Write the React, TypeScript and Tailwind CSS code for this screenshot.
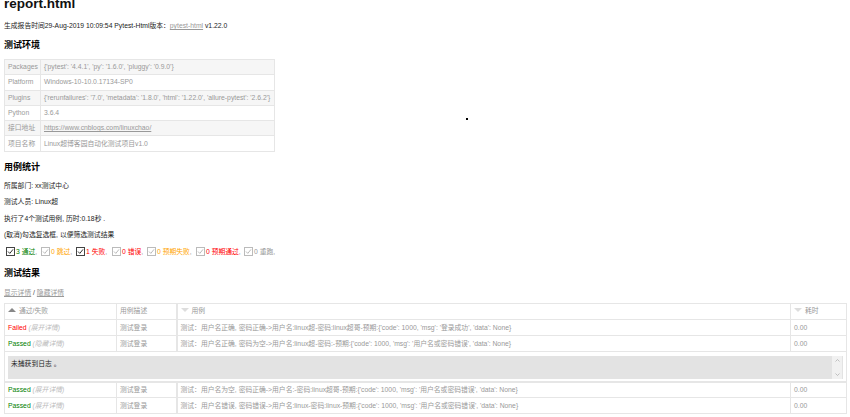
const font = '[font-family:"Liberation_Sans","Noto_Sans_CJK_SC",sans-serif]'

const envRows: [string, string, boolean?][] = [
  ['Packages', "{'pytest': '4.4.1', 'py': '1.6.0', 'pluggy': '0.9.0'}"],
  ['Platform', 'Windows-10-10.0.17134-SP0'],
  ['Plugins', "{'rerunfailures': '7.0', 'metadata': '1.8.0', 'html': '1.22.0', 'allure-pytest': '2.6.2'}"],
  ['Python', '3.6.4'],
  ['接口地址', 'https://www.cnblogs.com/linuxchao/', true],
  ['项目名称', 'Linux超博客园自动化测试项目v1.0'],
]

const filters = [
  { label: '3 通过', color: 'text-[#008000]', on: true, w: 'w-[35px]' },
  { label: '0 跳过', color: 'text-[#ffa500]', on: false, w: 'w-[35px]' },
  { label: '1 失败', color: 'text-[#ff0000]', on: true, w: 'w-[36px]' },
  { label: '0 错误', color: 'text-[#ff0000]', on: false, w: 'w-[35px]' },
  { label: '0 预期失败', color: 'text-[#ffa500]', on: false, w: 'w-[49px]' },
  { label: '0 预期通过', color: 'text-[#ff0000]', on: false, w: 'w-[48px]' },
  { label: '0 重跑', color: 'text-[#999999]', on: false, w: 'w-[30px]' },
]

const Check = ({ on }: { on: boolean }) => (
  <svg width="9" height="9" viewBox="0 0 9 9" className="shrink-0">
    <rect x="0.5" y="0.5" width="8" height="8" fill="#fff" stroke={on ? '#444' : '#bbb'} />
    <path d="M2 4.5 L3.8 6.4 L7 2.4" fill="none" stroke={on ? '#333' : '#bbb'} strokeWidth="1" />
  </svg>
)

const Heading = ({ children, className }: { children: string; className: string }) => (
  <h2 className={`text-[9px] leading-[12px] font-bold text-black ${className}`}>{children}</h2>
)

const Line = ({ children, className }: { children: string; className: string }) => (
  <p className={`text-[6.8px] leading-[10px] text-[#222] ${className}`}>{children}</p>
)

const ResultRow = ({ result, hint, name }: { result: string; hint: string; name: string }) => (
  <tr className="h-[16px] border-b border-[#e6e6e6]">
    <td className={`border-x border-[#e6e6e6] pt-[1px] pl-[3px] ${result === 'Failed' ? 'text-[#ff0000]' : 'text-[#008000]'}`}>
      {result} <span className="italic text-[#bbbbbb]">({hint})</span>
    </td>
    <td className="border-r-2 border-[#e6e6e6] pt-[1px] pl-[3px]">测试登录</td>
    <td className="border-r border-[#e6e6e6] pt-[1px] pl-[3px]">{name}</td>
    <td className="border-r border-[#e6e6e6] pt-[1px] pl-[3px]">0.00</td>
  </tr>
)

const Tri = ({ up, dark }: { up?: boolean; dark?: boolean }) => (
  <svg width="8" height="4" viewBox="0 0 8 4" className="mr-[3px] inline-block align-[1px]">
    <path d={up ? 'M0 4 L4 0 L8 4 Z' : 'M0 0 L8 0 L4 4 Z'} fill={dark ? '#888' : '#ddd'} />
  </svg>
)

export default function App() {
  return (
    <div className={`relative h-[417px] w-[850px] overflow-hidden bg-white pl-[4px] ${font}`}>
      <h1 className="mt-[-4px] text-[13.5px] leading-[16px] font-bold text-[#111]">report.html</h1>
      <p className="mt-[9px] text-[6.8px] leading-[10px] text-[#222]">
        生成报告时间29-Aug-2019 10:09:54 Pytest-Html版本：
        <span className="text-[#999] underline">pytest-html</span> v1.22.0
      </p>
      <Heading className="mt-[8px]">测试环境</Heading>

      <table className="mt-[8px] w-[271px] table-fixed border-collapse text-[6.8px] text-[#999]">
        <tbody>
          {envRows.map(([k, v, link], i) => (
            <tr key={k} className={`h-[15.3px] ${i % 2 === 0 ? 'bg-[#f6f6f6]' : 'bg-white'}`}>
              <td className="w-[36px] border border-[#e6e6e6] pl-[3px] whitespace-nowrap">{k}</td>
              <td className="border border-[#e6e6e6] pl-[3px] whitespace-nowrap">
                {link ? <span className="underline">{v}</span> : v}
              </td>
            </tr>
          ))}
        </tbody>
      </table>

      <Heading className="mt-[9px]">用例统计</Heading>
      <Line className="mt-[8px]">所属部门: xx测试中心</Line>
      <Line className="mt-[6px]">测试人员: Linux超</Line>
      <Line className="mt-[7px]">执行了4个测试用例, 历时:0.18秒 .</Line>
      <Line className="mt-[6px]">(取消)勾选复选框, 以便筛选测试结果</Line>

      <div className="mt-[7px] flex h-[10px] items-center pl-[2px] text-[6.8px] leading-[10px]">
        {filters.map((f) => (
          <div key={f.label} className={`flex shrink-0 items-center ${f.w}`}>
            <Check on={f.on} />
            <span className={`ml-[1px] whitespace-nowrap ${f.color}`}>{f.label}</span>
            <span className="text-[#999]">,</span>
          </div>
        ))}
      </div>

      <Heading className="mt-[10px]">测试结果</Heading>
      <p className="mt-[9px] text-[6.8px] leading-[10px] text-[#999]">
        <span className="underline">显示详情</span> <span className="text-[#444]">/</span>{' '}
        <span className="underline">隐藏详情</span>
      </p>

      <table className="mt-[5px] w-[843px] table-fixed border-collapse text-[6.8px] text-[#999]">
        <thead>
          <tr className="h-[16px] border-y border-[#e6e6e6] text-left font-normal">
            <th className="w-[112px] border-x border-[#e6e6e6] pl-[3px] font-normal">
              <Tri up dark />
              通过/失败
            </th>
            <th className="w-[60px] border-r-2 border-[#e6e6e6] pl-[3px] font-normal">用例描述</th>
            <th className="border-r border-[#e6e6e6] pl-[3px] font-normal">
              <Tri />
              用例
            </th>
            <th className="w-[56px] border-r border-[#e6e6e6] pl-[3px] font-normal">
              <Tri />
              耗时
            </th>
          </tr>
        </thead>
        <tbody>
          <ResultRow
            result="Failed"
            hint="展开详情"
            name="测试：用户名正确, 密码正确->用户名:linux超-密码:linux超哥-预期:{'code': 1000, 'msg': '登录成功', 'data': None}"
          />
          <ResultRow
            result="Passed"
            hint="隐藏详情"
            name="测试：用户名正确, 密码为空->用户名:linux超-密码:-预期:{'code': 1000, 'msg': '用户名或密码错误', 'data': None}"
          />
          <tr className="border-x border-b-2 border-[#e6e6e6]">
            <td colSpan={4} className="px-[3px] pt-[4px] pb-[2px]">
              <div className="flex h-[23px] bg-[#e3e3e3] text-[#222]">
                <span className="flex-1 pt-[3px] pl-[3px] leading-[10px]">未捕获到日志 。</span>
                <div className="mr-[1px] flex w-[10px] flex-col items-center justify-between bg-[#f1f1f1] py-[3px] text-[#aaa]">
                  <svg width="5" height="3" viewBox="0 0 5 3"><path d="M0.5 2.5 L2.5 0.5 L4.5 2.5" fill="none" stroke="currentColor" strokeWidth="0.7" /></svg>
                  <svg width="5" height="3" viewBox="0 0 5 3"><path d="M0.5 0.5 L2.5 2.5 L4.5 0.5" fill="none" stroke="currentColor" strokeWidth="0.7" /></svg>
                </div>
              </div>
            </td>
          </tr>
          <ResultRow
            result="Passed"
            hint="展开详情"
            name="测试：用户名为空, 密码正确->用户名:-密码:linux超哥-预期:{'code': 1000, 'msg': '用户名或密码错误', 'data': None}"
          />
          <ResultRow
            result="Passed"
            hint="展开详情"
            name="测试：用户名错误, 密码错误->用户名:linux-密码:linux-预期:{'code': 1000, 'msg': '用户名或密码错误', 'data': None}"
          />
        </tbody>
      </table>

      {/* stray dot in the blank area of the page */}
      <div className="absolute top-[118px] left-[466px] size-[2px] bg-black" />
    </div>
  )
}
